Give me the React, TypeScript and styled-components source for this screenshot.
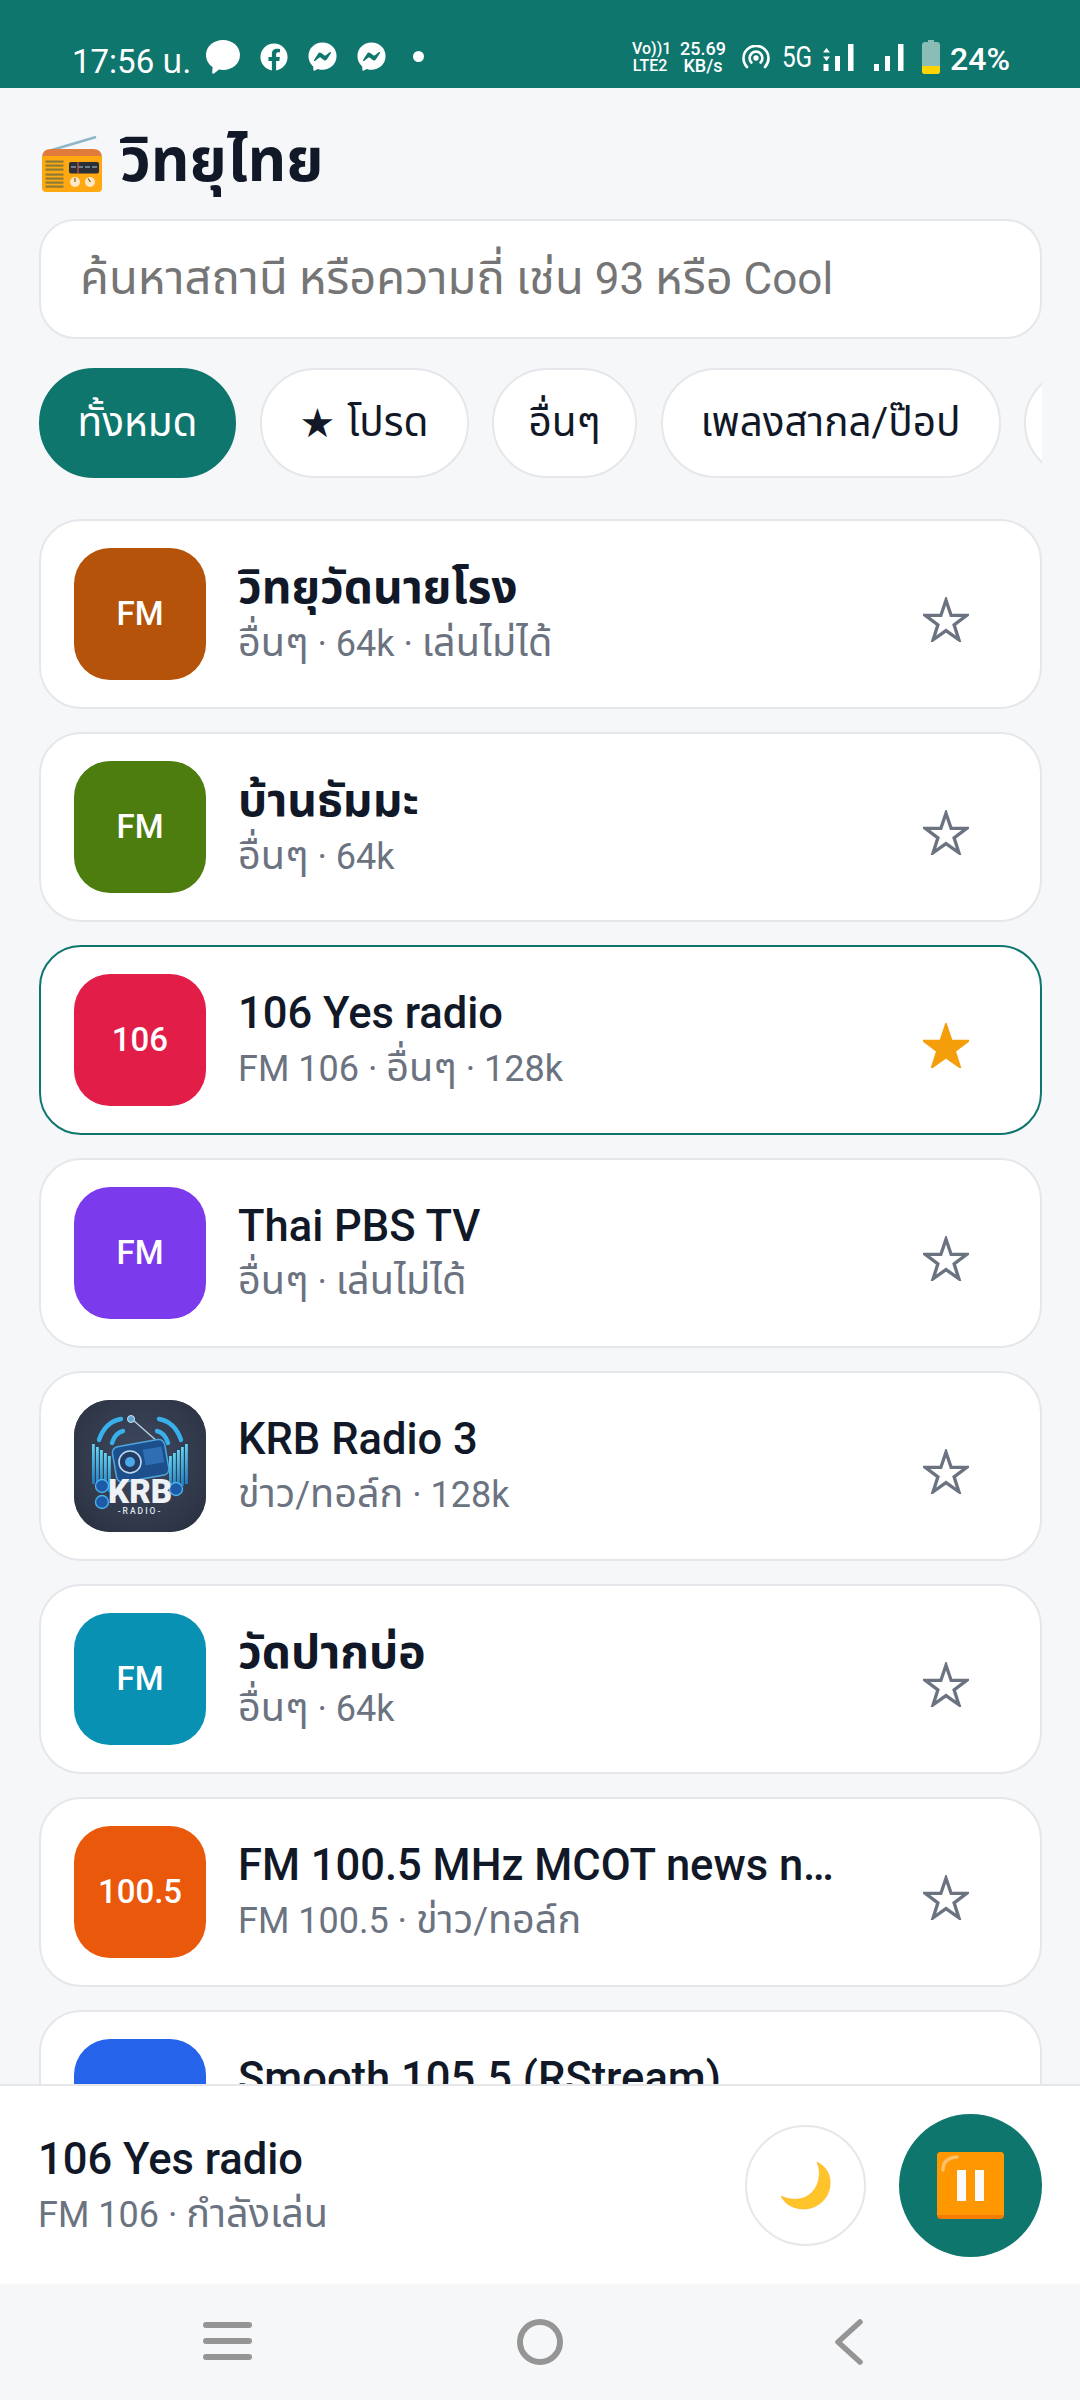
import React from 'react';
import styled, { createGlobalStyle } from 'styled-components';
import { FaFacebook, FaFacebookMessenger } from 'react-icons/fa';

const FONT = `Roboto, "Noto Sans", "Noto Sans Thai", "Liberation Sans", sans-serif`;
const TEAL = '#0f766e';
const PAGE_BG = '#f6f7f9';

const GlobalStyle = createGlobalStyle`
  html, body { margin: 0; padding: 0; background: ${PAGE_BG}; }
  * { box-sizing: border-box; }
  #root { font-family: ${FONT}; }
`;

const Page = styled.div`
  width: 1080px;
  height: 2400px;
  display: flex;
  flex-direction: column;
  background: ${PAGE_BG};
  overflow: hidden;
`;

const Th = styled.span`
  font-size: 1.1em;
`;

const StatusBar = styled.div`
  height: 88px;
  flex: none;
  background: ${TEAL};
  color: #fff;
  display: flex;
  align-items: center;
  padding: 30px 70px 0 72px;
`;
const Clock = styled.span`
  font-size: 33px;
  width: 134px;
  margin-top: 7px;
  white-space: nowrap;
`;
const NotifyIcons = styled.div`
  display: flex;
  align-items: center;
  gap: 20px;
  margin-top: -5px;
`;
const Dot = styled.i`
  width: 11px;
  height: 11px;
  border-radius: 50%;
  background: #fff;
  margin-left: 7px;
`;
const SysIcons = styled.div`
  margin-left: auto;
  margin-top: -4px;
  display: flex;
  align-items: center;
`;
const TinyStack = styled.div<{ $w: number; $ml: number; $size: number }>`
  width: ${(p) => p.$w}px;
  margin-left: ${(p) => p.$ml}px;
  font-size: ${(p) => p.$size}px;
  line-height: 17px;
  font-weight: 500;
  text-align: center;
  white-space: nowrap;
`;
const Spacer = styled.span<{ $w: number }>`
  flex: none;
  width: ${(p) => p.$w}px;
`;
const FiveG = styled.span`
  font-size: 29px;
  margin: 0 8px 0 9px;
  transform: scaleX(0.84);
`;
const BatteryLevel = styled.span`
  font-size: 32px;
  font-weight: 500;
  margin: 4px 0 0 10px;
`;

const Header = styled.div`
  height: 131px;
  flex: none;
  display: flex;
  align-items: center;
  gap: 17px;
  padding: 14px 0 0 41px;
`;
const RadioSlot = styled.div`
  display: flex;
  margin-top: 8px;
`;
const Title = styled.h1`
  margin: 0;
  font-size: 60px;
  line-height: 70px;
  font-weight: 700;
  color: #111827;
`;

const SearchBox = styled.div`
  flex: none;
  margin: 0 38px 0 39px;
  height: 120px;
  padding: 0 39px;
  display: flex;
  align-items: center;
  border: 2px solid #e5e7eb;
  border-radius: 36px;
  background: #fff;
  font-size: 44px;
  color: #757575;
  white-space: pre;
  ${Th} {
    font-size: 1.07em;
  }
`;

const Chips = styled.div`
  flex: none;
  margin: 29px 38px 41px 39px;
  display: flex;
  gap: 23.5px;
  overflow: hidden;
`;
const Chip = styled.div<{ $active?: boolean; $w: number }>`
  flex: none;
  width: ${(p) => p.$w}px;
  height: 110px;
  display: flex;
  align-items: center;
  justify-content: center;
  gap: 12px;
  border-radius: 55px;
  border: 2px solid ${(p) => (p.$active ? TEAL : '#e5e7eb')};
  background: ${(p) => (p.$active ? TEAL : '#fff')};
  color: ${(p) => (p.$active ? '#fff' : '#111827')};
  font-size: 40.5px;
  white-space: nowrap;
`;
const ChipStar = styled.span`
  font-family: "DejaVu Sans", sans-serif;
  font-size: 40px;
`;

const List = styled.div`
  flex: 1;
  min-height: 0;
  overflow: hidden;
  padding: 0 38px 0 39px;
  display: flex;
  flex-direction: column;
  gap: 23px;
`;
const Card = styled.div<{ $active?: boolean }>`
  flex: none;
  height: 190px;
  display: flex;
  align-items: center;
  gap: 32px;
  padding: 0 33px;
  background: #fff;
  border-radius: 42px;
  border: 2px solid ${(p) => (p.$active ? TEAL : '#e5e7eb')};
`;
const Avatar = styled.div<{ $bg: string }>`
  flex: none;
  width: 132px;
  height: 132px;
  border-radius: 36px;
  padding-bottom: 2px;
  background: ${(p) => p.$bg};
  color: #fff;
  font-size: 33px;
  font-weight: 500;
  display: flex;
  align-items: center;
  justify-content: center;
  overflow: hidden;
`;
const LogoAvatar = styled(Avatar)`
  padding-bottom: 0;
`;
const Info = styled.div`
  flex: 1;
  min-width: 0;
  margin-top: 3px;
`;
const Name = styled.div`
  font-size: 43.5px;
  line-height: 54px;
  font-weight: 500;
  color: #111827;
  white-space: nowrap;
  overflow: hidden;
  text-overflow: ellipsis;
  ${Th} {
    font-size: 1.06em;
    font-weight: 700;
  }
`;
const Meta = styled.div`
  font-size: 36px;
  line-height: 54px;
  color: #6b7280;
  white-space: nowrap;
`;
const StarSlot = styled.div`
  flex: none;
  width: 118px;
  margin: 11px 2px 0 0;
  display: flex;
  justify-content: center;
`;

const Player = styled.div`
  height: 200px;
  flex: none;
  background: #fff;
  border-top: 2px solid #e5e7eb;
  display: flex;
  align-items: center;
  padding: 0 38px 0 38px;
`;
const PlayerInfo = styled.div`
  flex: 1;
  min-width: 0;
`;
const PlayerName = styled.div`
  font-size: 43.5px;
  line-height: 58px;
  font-weight: 500;
  color: #111827;
`;
const PlayerMeta = styled.div`
  font-size: 36px;
  line-height: 50px;
  color: #6b7280;
`;
const MoonButton = styled.div`
  width: 121px;
  height: 121px;
  border-radius: 50%;
  border: 2px solid #e5e7eb;
  background: #fff;
  display: flex;
  align-items: center;
  justify-content: center;
  margin-right: 33px;
`;
const PauseButton = styled.div`
  width: 143px;
  height: 143px;
  border-radius: 50%;
  background: ${TEAL};
  display: flex;
  align-items: center;
  justify-content: center;
`;

const NavBar = styled.div`
  flex: none;
  height: 116px;
  display: grid;
  grid-template-columns: 228px 312px 309px;
  align-items: center;
  justify-items: end;
  background: ${PAGE_BG};
`;
const NavSlot = styled.div`
  display: flex;
  transform: translateX(50%);
`;

type Station = {
  badge?: string;
  bg: string;
  name: string;
  meta: string;
  fav?: boolean;
  logo?: boolean;
};

const stations: Station[] = [
  { badge: 'FM', bg: '#b45309', name: 'วิทยุวัดนายโรง', meta: 'อื่นๆ · 64k · เล่นไม่ได้' },
  { badge: 'FM', bg: '#4d7c0f', name: 'บ้านธัมมะ', meta: 'อื่นๆ · 64k' },
  { badge: '106', bg: '#e11d48', name: '106 Yes radio', meta: 'FM 106 · อื่นๆ · 128k', fav: true },
  { badge: 'FM', bg: '#7c3aed', name: 'Thai PBS TV', meta: 'อื่นๆ · เล่นไม่ได้' },
  { bg: '#2f3545', name: 'KRB Radio 3', meta: 'ข่าว/ทอล์ก · 128k', logo: true },
  { badge: 'FM', bg: '#0891b2', name: 'วัดปากบ่อ', meta: 'อื่นๆ · 64k' },
  { badge: '100.5', bg: '#ea580c', name: 'FM 100.5 MHz MCOT news network', meta: 'FM 100.5 · ข่าว/ทอล์ก' },
  { badge: '105.5', bg: '#2563eb', name: 'Smooth 105.5 (RStream)', meta: 'FM 105.5 · เพลงสากล/ป๊อป' },
];

// the reference's Thai face runs larger than its Latin one
const thaiRuns = (text: string) =>
  text.split(/([\u0E00-\u0E7F]+)/).map((run, i) =>
    /[\u0E00-\u0E7F]/.test(run) ? <Th key={i}>{run}</Th> : run
  );

const Star = ({ fav }: { fav?: boolean }) => (
  <svg width="46" height="45" viewBox="0 0 50 48">
    <path
      d="M25 3 L30.6 19.6 L47.5 19.6 L33.8 29.8 L39 46 L25 36 L11 46 L16.2 29.8 L2.5 19.6 L19.4 19.6 Z"
      fill={fav ? '#f59e0b' : 'none'}
      stroke={fav ? '#f59e0b' : '#6b7280'}
      strokeWidth="3.6"
      strokeLinejoin="miter"
    />
  </svg>
);

const RadioEmoji = () => (
  <svg width="62" height="57" viewBox="0 0 62 57">
    <path d="M11 14 L55 1" stroke="#8db6c8" strokeWidth="2.6" />
    <path d="M1 22 Q1 13 10 13 H52 Q61 13 61 22 V26 H1 Z" fill="#e07b39" />
    <path d="M1 20 H61 V52 Q61 56 57 56 H5 Q1 56 1 52 Z" fill="#ffa812" />
    {[25, 29, 33, 38, 42, 46, 50].map((y) => (
      <rect key={y} x="4.5" y={y - 0.5} width="18" height="2.2" fill="#8d7b36" />
    ))}
    <rect x="28" y="26" width="30" height="11.5" rx="2" fill="#2b2f38" />
    <path d="M30 31 H56" stroke="#7f9aa6" strokeWidth="1.4" strokeDasharray="5 2" />
    <path d="M37 26 V37.5" stroke="#d8503c" strokeWidth="1.2" />
    <circle cx="34" cy="46" r="5" fill="#ffe9c4" />
    <circle cx="49" cy="46" r="5" fill="#ffe9c4" />
    <path d="M34 42 V46 M47 42.5 L49.5 46" stroke="#7b5b2a" strokeWidth="1.2" />
  </svg>
);

const KrbLogo = () => (
  <svg width="132" height="132" viewBox="0 0 132 132">
    <defs>
      <radialGradient id="krbBg" cx="50%" cy="45%" r="70%">
        <stop offset="0%" stopColor="#3f4a60" />
        <stop offset="100%" stopColor="#2a3040" />
      </radialGradient>
      <linearGradient id="krbBar" x1="0" y1="0" x2="0" y2="1">
        <stop offset="0%" stopColor="#62d3f2" />
        <stop offset="100%" stopColor="#1f7fc4" />
      </linearGradient>
    </defs>
    <rect width="132" height="132" fill="url(#krbBg)" />
    <g fill="none" stroke="#39b0ea" strokeWidth="4.4" strokeLinecap="round">
      <path d="M25 40 Q31 22 47 19" />
      <path d="M38 43 Q41 33 49 31" />
      <path d="M107 40 Q101 22 85 19" />
      <path d="M94 43 Q91 33 83 31" />
    </g>
    {[0, 1, 2, 3, 4].map((i) => (
      <g key={i} fill="url(#krbBar)">
        <rect x={18 + i * 4} y={44 + i * 3} width="2.8" height={40 - i} />
        <rect x={111 - i * 4} y={44 + i * 3} width="2.8" height={40 - i} />
      </g>
    ))}
    <path d="M59 20 L84 42" stroke="#b8cfe0" strokeWidth="1.4" />
    <circle cx="57" cy="19" r="3.5" fill="#5aa7d8" stroke="#cfe2ee" strokeWidth="1" />
    <rect x="40" y="43" width="53" height="36" rx="6" fill="#1c4f8c" stroke="#4ea6de" strokeWidth="1.5" transform="rotate(-10 66 60)" />
    <circle cx="56" cy="62" r="11" fill="#233c66" stroke="#bcd8ea" strokeWidth="1.6" />
    <circle cx="56" cy="62" r="5" fill="#4ba9e8" />
    <rect x="70" y="48" width="19" height="16" fill="#2d6fb2" transform="rotate(-10 80 56)" />
    <circle cx="28" cy="86" r="6.5" fill="#1d5aa8" stroke="#49b2ea" strokeWidth="1.4" />
    <circle cx="28" cy="102" r="6.5" fill="#1d5aa8" stroke="#49b2ea" strokeWidth="1.4" />
    <circle cx="102" cy="89" r="6.5" fill="#1d5aa8" stroke="#49b2ea" strokeWidth="1.4" />
    <text x="66" y="103" textAnchor="middle" fontFamily="Roboto, sans-serif" fontWeight="900" fontSize="33" fill="#eef1f5">KRB</text>
    <text x="66" y="114" textAnchor="middle" fontFamily="Roboto, sans-serif" fontWeight="500" fontSize="8.5" letterSpacing="2" fill="#dfe5ec">-RADIO-</text>
  </svg>
);

const MoonIcon = () => (
  <svg width="50" height="49" viewBox="0 0 50 49">
    <path
      d="M36 1 C46 6 50 15 49 24 C48 38 36 48 23 48 C12 48 4 43 0 35 C8 39 20 40 28 34 C38 27 41 12 36 1Z"
      fill="#ffc429"
      stroke="#f7b21d"
      strokeWidth="0.6"
    />
  </svg>
);

const PauseIcon = () => (
  <svg width="67" height="67" viewBox="0 0 67 67">
    <rect width="67" height="67" rx="4" fill="#f57c00" />
    <path d="M0 4 Q0 0 4 0 H63 Q67 0 67 4 V63 H0 Z" fill="#ff9800" />
    <path d="M6 18 Q6 6 20 5" stroke="#ffc06a" strokeWidth="3.4" fill="none" strokeLinecap="round" />
    <rect x="20" y="18" width="9" height="31" fill="#fafafa" />
    <rect x="38" y="18" width="9" height="31" fill="#fafafa" />
  </svg>
);

const ChatBubble = () => (
  <svg width="34" height="34" viewBox="0 0 34 34">
    <path d="M17 0 C26.5 0 34 6.6 34 15 C34 23.4 26.5 30 17 30 C15.6 30 14.3 29.9 13 29.6 L8 33.6 C7 34 6 33.4 6.2 32.2 L6.6 27 C2.5 24.2 0 19.9 0 15 C0 6.6 7.5 0 17 0Z" fill="#fff" />
  </svg>
);

const SignalBars = ({ arrows }: { arrows?: boolean }) => (
  <svg width="32" height="28" viewBox="0 0 32 28" fill="#fff">
    {arrows ? (
      <>
        <path d="M3.5 0 L7 4.6 H0 Z M3.5 13 L7 8.4 H0 Z" transform="translate(0 5)" />
        <rect x="0.5" y="21" width="5" height="7" />
      </>
    ) : (
      <rect x="1" y="21" width="5" height="7" />
    )}
    <rect x="12" y="13" width="5" height="15" />
    <rect x="25" y="1" width="5.5" height="27" />
  </svg>
);

const HotspotIcon = () => (
  <svg width="28" height="24" viewBox="0 0 28 24" fill="none" stroke="#fff" strokeWidth="2.6" strokeLinecap="round">
    <path d="M5 22 A12.5 12.5 0 1 1 23 22" />
    <path d="M9.4 17.5 A6.4 6.4 0 1 1 18.6 17.5" />
    <circle cx="14" cy="13" r="1.4" fill="#fff" stroke="#fff" />
  </svg>
);

const BatteryIcon = () => (
  <svg width="18" height="34" viewBox="0 0 18 34">
    <path d="M6 0 H12 V2 H15 Q18 2 18 5 V31 Q18 34 15 34 H3 Q0 34 0 31 V5 Q0 2 3 2 H6 Z" fill="#8abdb5" />
    <path d="M0 26 H18 V31 Q18 34 15 34 H3 Q0 34 0 31 Z" fill="#ffd400" />
  </svg>
);

const App = () => (
  <Page>
    <GlobalStyle />
    <StatusBar>
      <Clock>17:56 น.</Clock>
      <NotifyIcons>
        <ChatBubble />
        <FaFacebook size={28} />
        <FaFacebookMessenger size={29} />
        <FaFacebookMessenger size={29} />
        <Dot />
      </NotifyIcons>
      <SysIcons>
        <TinyStack $w={36} $ml={0} $size={16}>
          Vo))1
          <br />
          LTE2
        </TinyStack>
        <TinyStack $w={50} $ml={10} $size={18}>
          25.69
          <br />
          KB/s
        </TinyStack>
        <Spacer $w={14} />
        <HotspotIcon />
        <FiveG>5G</FiveG>
        <SignalBars arrows />
        <Spacer $w={18} />
        <SignalBars />
        <Spacer $w={17} />
        <BatteryIcon />
        <BatteryLevel>24%</BatteryLevel>
      </SysIcons>
    </StatusBar>

    <Header>
      <RadioSlot>
        <RadioEmoji />
      </RadioSlot>
      <Title>วิทยุไทย</Title>
    </Header>

    <SearchBox>
      <span>{thaiRuns('ค้นหาสถานี หรือความถี่ เช่น 93 หรือ Cool')}</span>
    </SearchBox>

    <Chips>
      <Chip $active $w={197}>ทั้งหมด</Chip>
      <Chip $w={209}>
        <ChipStar>★</ChipStar>โปรด
      </Chip>
      <Chip $w={145}>อื่นๆ</Chip>
      <Chip $w={340}>เพลงสากล/ป๊อป</Chip>
      <Chip $w={300}>ข่าว/ทอล์ก</Chip>
    </Chips>

    <List>
      {stations.map((s) => (
        <Card key={s.name} $active={s.fav}>
          {s.logo ? (
            <LogoAvatar $bg={s.bg}>
              <KrbLogo />
            </LogoAvatar>
          ) : (
            <Avatar $bg={s.bg}>{s.badge}</Avatar>
          )}
          <Info>
            <Name>{thaiRuns(s.name)}</Name>
            <Meta>{thaiRuns(s.meta)}</Meta>
          </Info>
          <StarSlot>
            <Star fav={s.fav} />
          </StarSlot>
        </Card>
      ))}
    </List>

    <Player>
      <PlayerInfo>
        <PlayerName>106 Yes radio</PlayerName>
        <PlayerMeta>{thaiRuns('FM 106 · กำลังเล่น')}</PlayerMeta>
      </PlayerInfo>
      <MoonButton>
        <MoonIcon />
      </MoonButton>
      <PauseButton>
        <PauseIcon />
      </PauseButton>
    </Player>

    <NavBar>
      <NavSlot>
        <svg width="50" height="40" viewBox="0 0 50 40" fill="#959595">
          <rect x="0" y="0" width="49" height="6" rx="3" />
          <rect x="0" y="16" width="49" height="6" rx="3" />
          <rect x="0" y="32" width="49" height="6" rx="3" />
        </svg>
      </NavSlot>
      <NavSlot>
        <svg width="48" height="48" viewBox="0 0 48 48" fill="none" stroke="#959595" strokeWidth="6">
          <circle cx="24" cy="24" r="20" />
        </svg>
      </NavSlot>
      <NavSlot>
        <svg width="30" height="46" viewBox="0 0 30 46" fill="none" stroke="#959595" strokeWidth="5.5" strokeLinecap="round" strokeLinejoin="round">
          <path d="M26 3 L4 23 L26 43" />
        </svg>
      </NavSlot>
    </NavBar>
  </Page>
);

export default App;
